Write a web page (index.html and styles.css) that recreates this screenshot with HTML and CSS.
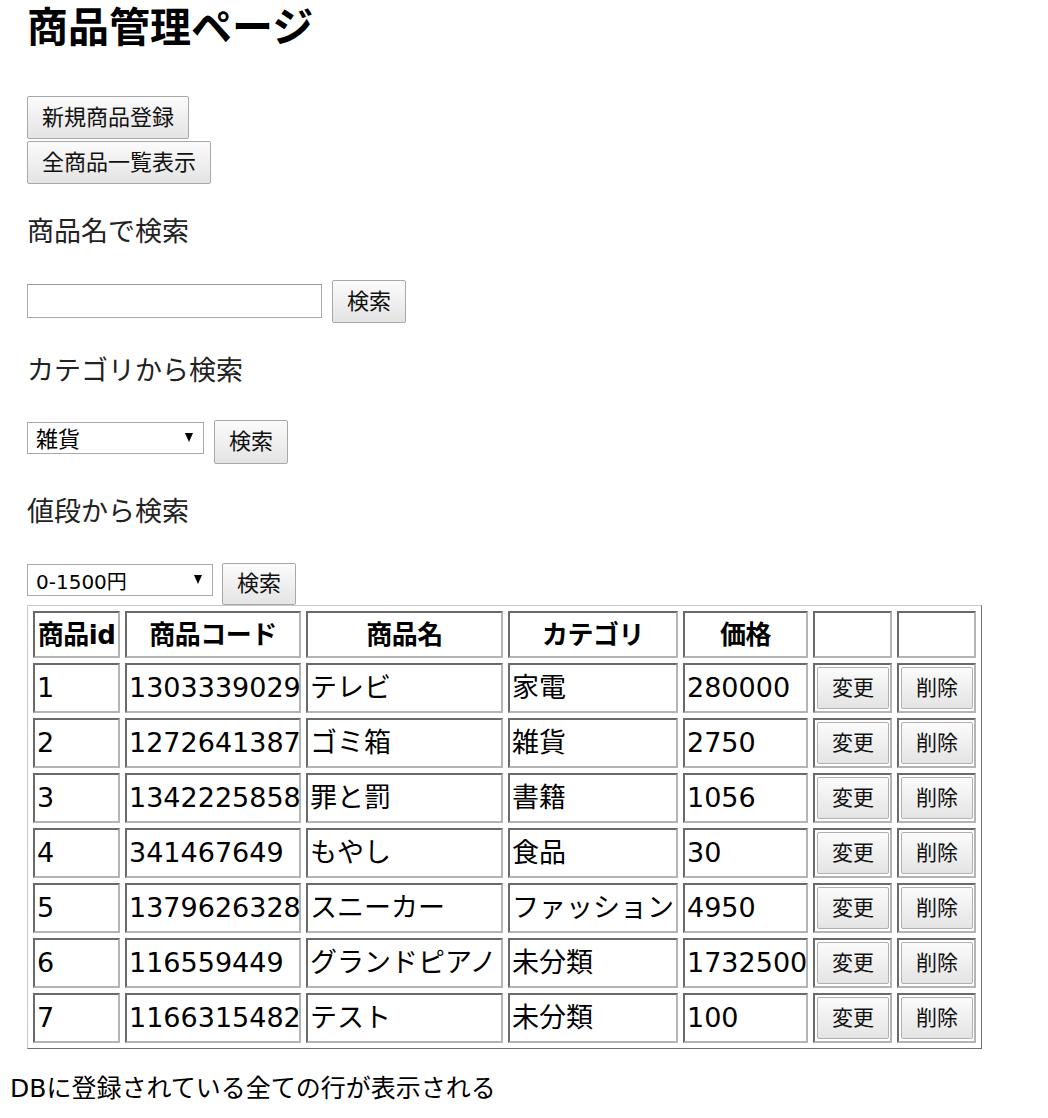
FILE: index.html
```html
<!DOCTYPE html>
<html lang="ja">
<head>
<meta charset="utf-8">
<title>商品管理ページ</title>
<link rel="stylesheet" href="styles.css">
</head>
<body>
<div class="page">
  <h1 class="title">商品管理ページ</h1>
  <div class="actions">
    <button class="btn btn-big">新規商品登録</button>
    <button class="btn btn-big">全商品一覧表示</button>
  </div>

  <p class="section">商品名で検索</p>
  <div class="row row-name">
    <input class="text-input" type="text">
    <button class="btn btn-big">検索</button>
  </div>

  <p class="section">カテゴリから検索</p>
  <div class="row row-cat">
    <span class="select select-cat"><select class="select-box select-box-cat"><option>雑貨</option></select></span>
    <button class="btn btn-big btn-cat">検索</button>
  </div>

  <p class="section">値段から検索</p>
  <div class="row row-price">
    <span class="select select-price"><select class="select-box"><option>0-1500円</option></select></span>
    <button class="btn btn-big btn-price">検索</button>
  </div>

  <table class="products">
    <thead>
      <tr>
        <th class="c-id">商品id</th>
        <th class="c-code">商品コード</th>
        <th class="c-name">商品名</th>
        <th class="c-cat">カテゴリ</th>
        <th class="c-price">価格</th>
        <th class="c-act"></th>
        <th class="c-act"></th>
      </tr>
    </thead>
    <tbody>
      <tr><td>1</td><td>1303339029</td><td>テレビ</td><td>家電</td><td>280000</td><td class="act"><button class="btn btn-cell">変更</button></td><td class="act"><button class="btn btn-cell">削除</button></td></tr>
      <tr><td>2</td><td>1272641387</td><td>ゴミ箱</td><td>雑貨</td><td>2750</td><td class="act"><button class="btn btn-cell">変更</button></td><td class="act"><button class="btn btn-cell">削除</button></td></tr>
      <tr><td>3</td><td>1342225858</td><td>罪と罰</td><td>書籍</td><td>1056</td><td class="act"><button class="btn btn-cell">変更</button></td><td class="act"><button class="btn btn-cell">削除</button></td></tr>
      <tr><td>4</td><td>341467649</td><td>もやし</td><td>食品</td><td>30</td><td class="act"><button class="btn btn-cell">変更</button></td><td class="act"><button class="btn btn-cell">削除</button></td></tr>
      <tr><td>5</td><td>1379626328</td><td>スニーカー</td><td>ファッション</td><td>4950</td><td class="act"><button class="btn btn-cell">変更</button></td><td class="act"><button class="btn btn-cell">削除</button></td></tr>
      <tr><td>6</td><td>116559449</td><td>グランドピアノ</td><td>未分類</td><td>1732500</td><td class="act"><button class="btn btn-cell">変更</button></td><td class="act"><button class="btn btn-cell">削除</button></td></tr>
      <tr><td>7</td><td>1166315482</td><td>テスト</td><td>未分類</td><td>100</td><td class="act"><button class="btn btn-cell">変更</button></td><td class="act"><button class="btn btn-cell">削除</button></td></tr>
    </tbody>
  </table>
</div>
<p class="caption">DBに登録されている全ての行が表示される</p>
</body>
</html>
```

FILE: styles.css
```css
* { box-sizing: border-box; }

html, body {
  margin: 0;
  padding: 0;
  background: #fff;
}

body {
  font-family: "DejaVu Sans", "Noto Sans CJK JP", sans-serif;
  color: #000;
}

.page {
  padding: 4px 0 0 27px;
}

.title {
  margin: 0;
  font-family: "DejaVu Sans", "Noto Sans CJK JP", sans-serif;
  font-size: 41px;
  line-height: 48px;
  font-weight: 700;
  color: #000;
  white-space: nowrap;
}

.actions {
  margin-top: 44px;
  display: flex;
  flex-direction: column;
  align-items: flex-start;
  gap: 2px;
}

.btn {
  font-family: "DejaVu Sans", "Noto Sans CJK JP", sans-serif;
  color: #111;
  background: linear-gradient(#fbfbfb, #e4e4e4);
  border: 1px solid #a8a8a8;
  border-radius: 2px;
  margin: 0;
  cursor: default;
  white-space: nowrap;
}

.btn-big {
  font-size: 22px;
  line-height: 1;
  height: 43px;
  padding: 0 14px;
}

.section {
  margin: 30px 0 0;
  font-size: 27px;
  line-height: 36px;
  color: #222;
}

.row {
  display: flex;
  align-items: flex-start;
  gap: 10px;
  margin-top: 31px;
}

.row-name { margin-top: 30px; }
.row-cat { margin-top: 31px; }
.row-price { margin-top: 33px; gap: 9px; }

.text-input {
  width: 295px;
  height: 34px;
  margin: 4px 0 0;
  border: 1px solid #a9a9a9;
  border-top-color: #999;
  background: #fff;
  padding: 0 6px;
  font-size: 20px;
}

.btn-cat { height: 44px; }
.btn-price { height: 42px; }

.select {
  position: relative;
  display: block;
}

.select-cat { width: 177px; margin-top: 2px; }
.select-price { width: 186px; margin-top: 1px; }

.select-box {
  -webkit-appearance: none;
  appearance: none;
  display: block;
  width: 100%;
  height: 32px;
  margin: 0;
  border: 1px solid #a9a9a9;
  border-radius: 0;
  background: #fff;
  color: #000;
  font-family: "DejaVu Sans", "Noto Sans CJK JP", sans-serif;
  font-size: 20px;
  line-height: 26px;
  padding: 4px 0 0 8px;
}

.select-box-cat {
  font-size: 22px;
  padding-top: 3px;
}

.select::after {
  content: "";
  position: absolute;
  right: 11px;
  top: 11px;
  width: 0;
  height: 0;
  border-left: 4px solid transparent;
  border-right: 4px solid transparent;
  border-top: 9px solid #000;
  pointer-events: none;
}

.products {
  table-layout: fixed;
  width: 955px;
  border-collapse: separate;
  border-spacing: 5px;
  border: 1px solid;
  border-color: #c8c8c8 #6e6e6e #6e6e6e #c8c8c8;
  margin-top: 0;
}

.products th,
.products td {
  border: 2px solid;
  border-color: #6a6a6a #b4b4b4 #b4b4b4 #6a6a6a;
  padding: 0 2px;
  font-size: 27px;
  white-space: nowrap;
  overflow: visible;
}

.products th {
  height: 47px;
  font-size: 26px;
  font-weight: 700;
  text-align: center;
  line-height: 36px;
  letter-spacing: -0.5px;
}

.products td {
  height: 50px;
  text-align: left;
  line-height: 40px;
}

.c-id { width: 87px; }
.c-code { width: 176px; }
.c-name { width: 197px; }
.c-cat { width: 170px; }
.c-price { width: 125px; }
.c-act { width: 79px; }

.products td.act {
  text-align: center;
  padding: 1px 2px;
}

.btn-cell {
  display: block;
  width: 72px;
  height: 42px;
  margin: 0 auto;
  padding: 0;
  font-size: 21px;
  line-height: 1;
  border-color: #b0b0b0;
}

.caption {
  margin: 22px 0 0 10px;
  font-size: 25px;
  line-height: 36px;
  color: #000;
}
```
